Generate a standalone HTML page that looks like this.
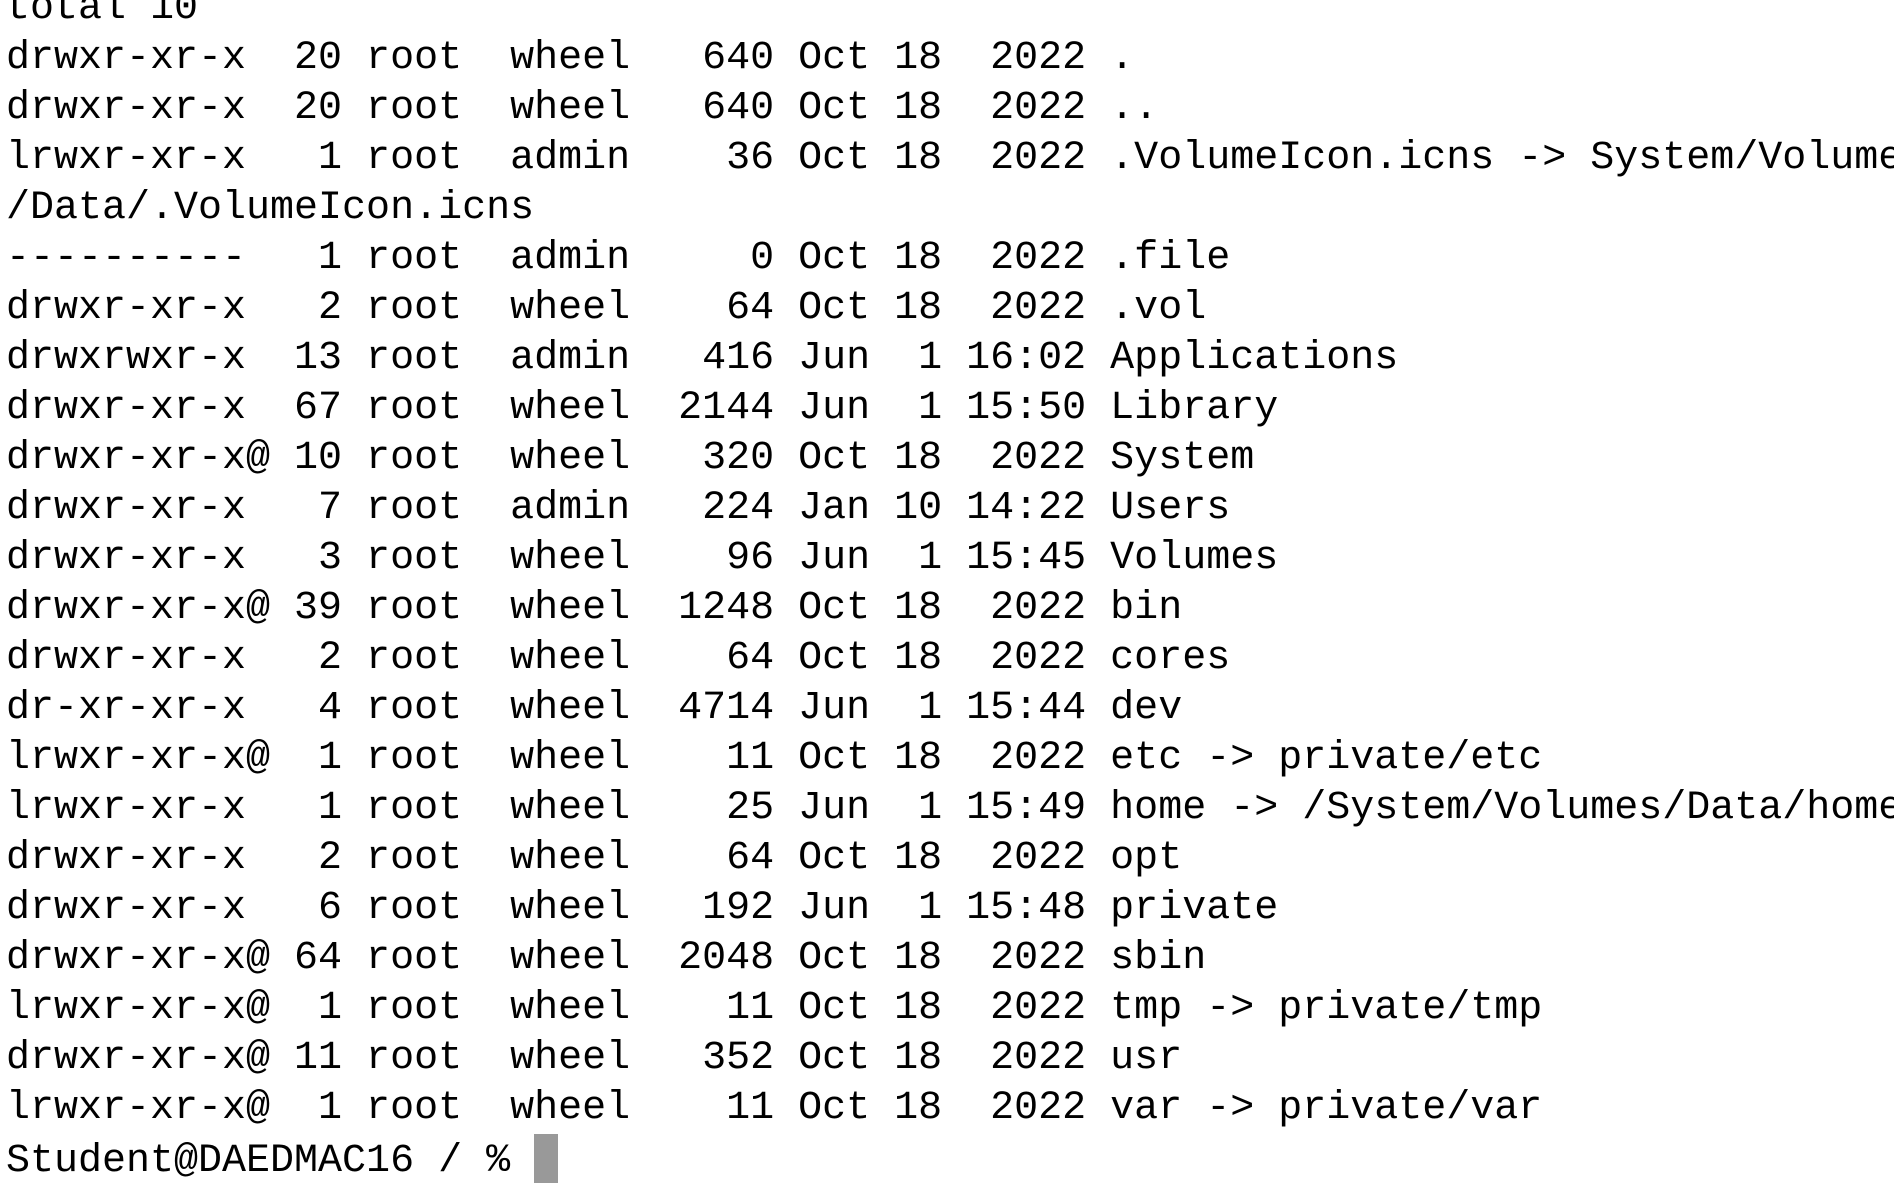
<!DOCTYPE html>
<html><head><meta charset="utf-8"><style>
html,body{margin:0;padding:0;background:#fff;width:1894px;height:1190px;overflow:hidden}
pre{margin:0;position:absolute;left:6px;top:-16px;font-family:"Liberation Mono",monospace;font-size:40px;line-height:50px;color:#000;white-space:pre}
.cur{display:inline-block;width:24px;height:49px;background:#999;vertical-align:-12px}
</style></head><body><pre>total 10
drwxr-xr-x  20 root  wheel   640 Oct 18  2022 .
drwxr-xr-x  20 root  wheel   640 Oct 18  2022 ..
lrwxr-xr-x   1 root  admin    36 Oct 18  2022 .VolumeIcon.icns -&gt; System/Volumes
/Data/.VolumeIcon.icns
----------   1 root  admin     0 Oct 18  2022 .file
drwxr-xr-x   2 root  wheel    64 Oct 18  2022 .vol
drwxrwxr-x  13 root  admin   416 Jun  1 16:02 Applications
drwxr-xr-x  67 root  wheel  2144 Jun  1 15:50 Library
drwxr-xr-x@ 10 root  wheel   320 Oct 18  2022 System
drwxr-xr-x   7 root  admin   224 Jan 10 14:22 Users
drwxr-xr-x   3 root  wheel    96 Jun  1 15:45 Volumes
drwxr-xr-x@ 39 root  wheel  1248 Oct 18  2022 bin
drwxr-xr-x   2 root  wheel    64 Oct 18  2022 cores
dr-xr-xr-x   4 root  wheel  4714 Jun  1 15:44 dev
lrwxr-xr-x@  1 root  wheel    11 Oct 18  2022 etc -&gt; private/etc
lrwxr-xr-x   1 root  wheel    25 Jun  1 15:49 home -&gt; /System/Volumes/Data/home
drwxr-xr-x   2 root  wheel    64 Oct 18  2022 opt
drwxr-xr-x   6 root  wheel   192 Jun  1 15:48 private
drwxr-xr-x@ 64 root  wheel  2048 Oct 18  2022 sbin
lrwxr-xr-x@  1 root  wheel    11 Oct 18  2022 tmp -&gt; private/tmp
drwxr-xr-x@ 11 root  wheel   352 Oct 18  2022 usr
lrwxr-xr-x@  1 root  wheel    11 Oct 18  2022 var -&gt; private/var
Student@DAEDMAC16 / % <span class="cur"></span></pre></body></html>
